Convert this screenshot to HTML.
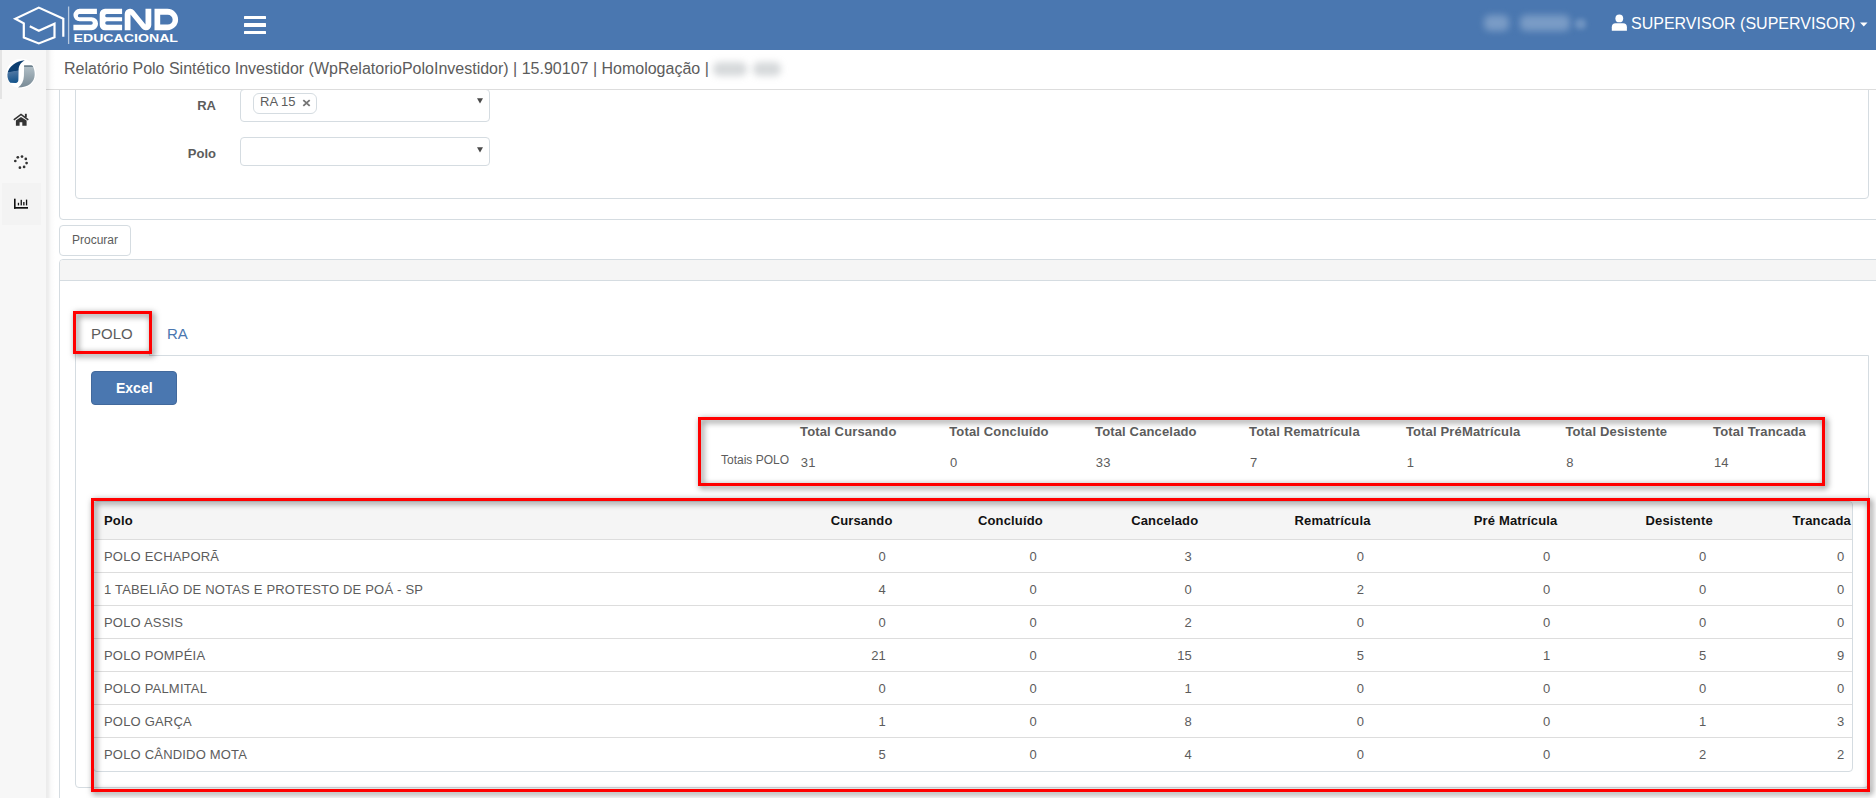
<!DOCTYPE html>
<html>
<head>
<meta charset="utf-8">
<style>
*{box-sizing:border-box;margin:0;padding:0}
html,body{width:1876px;height:798px;overflow:hidden;background:#fff;font-family:"Liberation Sans",sans-serif;color:#5c5c5c}
.abs{position:absolute}
#hdr{position:absolute;left:0;top:0;width:1876px;height:50px;background:#4a77b0}
#side{position:absolute;z-index:3;left:0;top:50px;width:46px;height:748px;background:#f7f7f7}
#sideshadow{position:absolute;z-index:3;left:46px;top:50px;width:9px;height:748px;background:linear-gradient(to right,rgba(0,0,0,0.075) 0,rgba(0,0,0,0.07) 2px,rgba(0,0,0,0.02) 5px,rgba(0,0,0,0) 9px)}
#title{position:absolute;left:46px;top:50px;width:1830px;height:40px;background:#fff;border-bottom:1px solid #ddd}
#content{position:absolute;left:0;top:90px;width:1876px;height:708px;overflow:hidden}
.bd{border:1px solid #d5dce1}
.t13{font-size:13px;letter-spacing:0.15px}
.b{font-weight:bold}
.red{border:3.5px solid #f00;filter:drop-shadow(2px 2px 3px rgba(0,0,0,0.6))}
</style>
</head>
<body>
<div id="hdr">
  <svg class="abs" style="left:0;top:0" width="200" height="50" viewBox="0 0 200 50">
    <g fill="none" stroke="#fff" stroke-width="2.2" stroke-linejoin="miter" stroke-linecap="butt">
      <polyline points="63.3,36.8 63.3,18.8 38.8,7.6 15.3,18.8 23.8,23.4 23.8,37.4 38.8,43.4 54.5,37.2 54.5,23.8 38.8,30.7 29.8,26.3"/>
    </g>
    <line x1="68.6" y1="6.5" x2="68.6" y2="44" stroke="rgba(255,255,255,0.6)" stroke-width="1.3"/>
    <g fill="#fff">
      <path fill-rule="evenodd" d="M96.9,8.8 L79.65,8.8 A6.25,6.25 0 0 0 79.65,21.3 L91.1,21.3 A1.7,1.7 0 0 1 91.1,24.7 L73.4,24.7 L73.4,30.2 L91.55,30.2 A6.5,6.5 0 0 0 91.55,17.2 L79.4,17.2 A1.55,1.55 0 0 1 79.4,14.1 L96.9,14.1 Z
M122.1,8.8 L105,8.8 A5.3,5.3 0 0 0 99.7,14.1 L99.7,24.9 A5.3,5.3 0 0 0 105,30.2 L122.1,30.2 L122.1,24.7 L106.9,24.7 A1.7,1.7 0 0 1 106.9,21.3 L122.1,21.3 L122.1,17.2 L106.75,17.2 A1.55,1.55 0 0 1 106.75,14.1 L122.1,14.1 Z
M124.7,30.2 L124.7,14 A5.2,5.2 0 0 1 129.9,8.8 L130.5,8.8 Q132.5,8.8 134,10.6 L145.5,24.6 L145.5,8.8 L151.3,8.8 L151.3,25 A5.2,5.2 0 0 1 146.1,30.2 L145.5,30.2 Q143.5,30.2 142,28.4 L130.5,14.4 L130.5,30.2 Z
M154.5,8.8 L167.4,8.8 A10.7,10.7 0 0 1 167.4,30.2 L154.5,30.2 Z M160.2,14.7 L167.7,14.7 A4.95,4.95 0 0 1 167.7,24.6 L160.2,24.6 Z"/>
      <text x="73.5" y="42.1" font-family="Liberation Sans" font-weight="bold" font-size="11" textLength="104.5" lengthAdjust="spacingAndGlyphs">EDUCACIONAL</text>
    </g>
  </svg>
  <div class="abs" style="left:244px;top:15.5px;width:22px;height:3.7px;background:#fff;border-radius:0.5px"></div>
  <div class="abs" style="left:244px;top:23px;width:22px;height:3.7px;background:#fff;border-radius:0.5px"></div>
  <div class="abs" style="left:244px;top:30.7px;width:22px;height:3.7px;background:#fff;border-radius:0.5px"></div>
  <!-- blurred -->
  <div class="abs" style="left:1484px;top:15px;width:25px;height:16px;background:rgba(200,215,235,0.38);filter:blur(3.5px);border-radius:6px"></div>
  <div class="abs" style="left:1520px;top:15px;width:50px;height:16px;background:rgba(200,215,235,0.38);filter:blur(3.5px);border-radius:6px"></div>
  <div class="abs" style="left:1575px;top:19px;width:11px;height:10px;background:rgba(200,215,235,0.3);filter:blur(2.5px);border-radius:4px"></div>
  <!-- user -->
  <svg class="abs" style="left:1611px;top:14px" width="17" height="17" viewBox="0 0 17 17">
    <circle cx="8.3" cy="4.4" r="3.9" fill="#fff"/>
    <path d="M0.8,16.8 L0.8,13.2 Q0.8,9.2 4.6,9.2 L12,9.2 Q15.9,9.2 15.9,13.2 L15.9,16.8 Z" fill="#fff"/>
  </svg>
  <div class="abs" style="left:1631px;top:15px;font-size:16px;color:#fff;white-space:nowrap;line-height:18px">SUPERVISOR (SUPERVISOR)</div>
  <svg class="abs" style="left:1860px;top:22px" width="8" height="5" viewBox="0 0 8 5"><path d="M0,0.5 L7.5,0.5 L3.75,4.4 Z" fill="#fff"/></svg>
</div>

<div id="side">
  <div class="abs" style="left:0;top:0;width:2px;height:49px;background:#e4e4e4"></div>
  <svg class="abs" style="left:0;top:0" width="46" height="46" viewBox="0 50 46 46">
    <defs>
      <linearGradient id="gb" gradientUnits="userSpaceOnUse" x1="19" y1="60" x2="23" y2="83">
        <stop offset="0" stop-color="#0c3d6f"/><stop offset="0.42" stop-color="#0c3f72"/>
        <stop offset="0.45" stop-color="#4d76a2"/><stop offset="1" stop-color="#0a4e87"/>
      </linearGradient>
      <linearGradient id="gg" gradientUnits="userSpaceOnUse" x1="0" y1="65.2" x2="0" y2="87.6">
        <stop offset="0" stop-color="#687c89"/><stop offset="0.07" stop-color="#6f8390"/><stop offset="0.1" stop-color="#aebcc4"/>
        <stop offset="1" stop-color="#788a95"/>
      </linearGradient>
    </defs>
    <circle cx="21.2" cy="73.6" r="14.8" fill="#fff"/>
    <path d="M24.75,60.3 C17,61 8,66 7.4,74.5 C7.2,78 8.5,81 10.3,82.8 L15.5,83 C17.5,83 18.4,81.5 18.4,79.5 L18.6,70 C18.7,66 20.5,62.5 24.75,60.3 Z" fill="url(#gb)"/>
    <path d="M24.1,65.2 L31.3,65.2 C32.5,65.2 33.2,66.5 33.6,67.8 C34.4,70 34.8,72.5 34.7,75 C34.4,82 28.5,87.6 18,87.6 C21.5,85 23.8,81 23.9,76 Z" fill="url(#gg)"/>
  </svg>
  <svg class="abs" style="left:12px;top:62px" width="18" height="14" viewBox="12 112 18 14">
    <path d="M13.8,119.9 L21,114.4 L28.3,119.9" fill="none" stroke="#333" stroke-width="1.6"/>
    <rect x="24.9" y="113.8" width="1.9" height="3.6" fill="#333"/>
    <path d="M15.9,120.6 L21,116.9 L26.6,120.6 L26.6,125.8 L22.3,125.8 L22.3,122.2 L19.6,122.2 L19.6,125.8 L15.9,125.8 Z" fill="#333"/>
  </svg>
  <svg class="abs" style="left:12px;top:104px" width="18" height="16" viewBox="12 154 18 16">
    <g fill="#333">
      <circle cx="17.8" cy="157.3" r="1.35"/><circle cx="22" cy="156.6" r="1.35"/>
      <circle cx="25.8" cy="158.9" r="1.35"/><circle cx="26.6" cy="163.1" r="1.35"/>
      <circle cx="24.1" cy="166.9" r="1.35"/><circle cx="19.9" cy="167.7" r="1.35"/>
      <circle cx="15.3" cy="161" r="1.35"/>
    </g>
  </svg>
  <div class="abs" style="left:2px;top:133px;width:39px;height:42px;background:#f3f3f3"></div>
  <svg class="abs" style="left:12px;top:146px" width="18" height="14" viewBox="12 196 18 14">
    <g fill="#111">
      <rect x="14" y="198.7" width="1.6" height="10"/><rect x="14" y="207" width="14" height="1.7"/>
      <rect x="17.8" y="202.8" width="1.3" height="2.6"/><rect x="20.6" y="199.8" width="1.3" height="5.6"/>
      <rect x="23.2" y="202" width="1.3" height="3.4"/><rect x="25.9" y="199.6" width="1.3" height="5.8"/>
    </g>
  </svg>
</div>

<div id="title">
  <div class="abs" style="left:18px;top:10px;font-size:16px;line-height:18px;white-space:nowrap;color:#5c5c5c">Relatório Polo Sintético Investidor (WpRelatorioPoloInvestidor) | 15.90107 | Homologação |</div>
  <div class="abs" style="left:667px;top:12px;width:34px;height:14px;background:rgba(120,128,136,0.3);filter:blur(3.5px);border-radius:6px"></div>
  <div class="abs" style="left:707px;top:12px;width:28px;height:14px;background:rgba(120,128,136,0.3);filter:blur(3.5px);border-radius:6px"></div>
</div>

<div id="content">
<div class="abs bd" style="left:59px;top:-50px;width:1900px;height:180px;border-radius:4px"></div>
<div class="abs bd" style="left:75px;top:-50px;width:1794px;height:159px;border-radius:4px"></div>
<div class="abs b" style="left:116px;width:100px;text-align:right;top:8px;font-size:13px;line-height:15px;color:#5c5c5c">RA</div>
<div class="abs b" style="left:116px;width:100px;text-align:right;top:56px;font-size:13px;line-height:15px;color:#5c5c5c">Polo</div>
<div class="abs bd" style="left:240px;top:-1px;width:250px;height:33px;border-radius:4px"></div>
<div class="abs bd" style="left:253px;top:3px;width:64px;height:21px;border-radius:6px"></div>
<div class="abs t13" style="left:260px;top:4px;line-height:15px;color:#5c5c5c;letter-spacing:0">RA 15</div>
<svg class="abs" style="left:302px;top:9px" width="9" height="8" viewBox="0 0 9 8"><path d="M1.3,1.1 L7.7,6.9 M7.7,1.1 L1.3,6.9" stroke="#747474" stroke-width="1.85"/></svg>
<svg class="abs" style="left:476px;top:8px" width="7" height="6" viewBox="0 0 7 6"><path d="M1,0.3 L7,0.3 L4,5.6 Z" fill="#4a4a4a"/></svg>
<div class="abs bd" style="left:240px;top:47px;width:250px;height:29px;border-radius:4px"></div>
<svg class="abs" style="left:476px;top:57px" width="7" height="6" viewBox="0 0 7 6"><path d="M1,0.3 L7,0.3 L4,5.6 Z" fill="#4a4a4a"/></svg>
<div class="abs bd" style="left:59px;top:135px;width:72px;height:31px;border-radius:4px"></div>
<div class="abs" style="left:72px;top:143px;font-size:12px;line-height:14px;color:#5c5c5c">Procurar</div>
<div class="abs bd" style="left:59px;top:169px;width:1900px;height:700px;border-radius:4px"></div>
<div class="abs" style="left:60px;top:170px;width:1900px;height:21px;background:#f5f5f5;border-bottom:1px solid #d5dce1;border-top-left-radius:3px"></div>
<div class="abs bd" style="left:75px;top:265px;width:1794px;height:433px;border-radius:0 0 4px 4px"></div>
<div class="abs" style="left:75px;top:222px;width:75px;height:44px;background:#fff;border:1px solid #d5dce1;border-bottom:0;border-radius:4px 4px 0 0"></div>
<div class="abs" style="left:91px;top:235px;font-size:15px;line-height:17px;color:#5c5c5c">POLO</div>
<div class="abs" style="left:167px;top:235px;font-size:15px;line-height:17px;color:#4a77b0">RA</div>
<div class="abs" style="left:91px;top:281px;width:86px;height:34px;border-radius:4px;background:#4a77b0;border:1px solid #42699c"></div>
<div class="abs b" style="left:116px;top:290px;font-size:14px;line-height:16px;color:#fff">Excel</div>
<div class="abs b t13" style="left:800.0px;top:334px;line-height:15px;color:#5c5c5c;white-space:nowrap">Total Cursando</div>
<div class="abs t13" style="left:800.8px;top:365px;line-height:15px;color:#5c5c5c">31</div>
<div class="abs b t13" style="left:949.2px;top:334px;line-height:15px;color:#5c5c5c;white-space:nowrap">Total Concluído</div>
<div class="abs t13" style="left:950.0px;top:365px;line-height:15px;color:#5c5c5c">0</div>
<div class="abs b t13" style="left:1095.0px;top:334px;line-height:15px;color:#5c5c5c;white-space:nowrap">Total Cancelado</div>
<div class="abs t13" style="left:1095.8px;top:365px;line-height:15px;color:#5c5c5c">33</div>
<div class="abs b t13" style="left:1249.1px;top:334px;line-height:15px;color:#5c5c5c;white-space:nowrap">Total Rematrícula</div>
<div class="abs t13" style="left:1249.9px;top:365px;line-height:15px;color:#5c5c5c">7</div>
<div class="abs b t13" style="left:1405.9px;top:334px;line-height:15px;color:#5c5c5c;white-space:nowrap">Total PréMatrícula</div>
<div class="abs t13" style="left:1406.7px;top:365px;line-height:15px;color:#5c5c5c">1</div>
<div class="abs b t13" style="left:1565.4px;top:334px;line-height:15px;color:#5c5c5c;white-space:nowrap">Total Desistente</div>
<div class="abs t13" style="left:1566.2px;top:365px;line-height:15px;color:#5c5c5c">8</div>
<div class="abs b t13" style="left:1713.1px;top:334px;line-height:15px;color:#5c5c5c;white-space:nowrap">Total Trancada</div>
<div class="abs t13" style="left:1713.9px;top:365px;line-height:15px;color:#5c5c5c">14</div>
<div class="abs" style="left:721px;top:363px;font-size:12px;line-height:14px;color:#5c5c5c;white-space:nowrap">Totais POLO</div>
<div class="abs bd" style="left:93px;top:411px;width:1760px;height:271px;border-radius:4px;overflow:hidden">
<div class="abs" style="left:0;top:0;width:1760px;height:37px;background:#f5f5f5"></div>
<div class="abs" style="left:0;top:37px;width:1760px;height:1px;background:#ddd"></div>
<div class="abs" style="left:0;top:70px;width:1760px;height:1px;background:#ddd"></div>
<div class="abs" style="left:0;top:103px;width:1760px;height:1px;background:#ddd"></div>
<div class="abs" style="left:0;top:136px;width:1760px;height:1px;background:#ddd"></div>
<div class="abs" style="left:0;top:169px;width:1760px;height:1px;background:#ddd"></div>
<div class="abs" style="left:0;top:202px;width:1760px;height:1px;background:#ddd"></div>
<div class="abs" style="left:0;top:235px;width:1760px;height:1px;background:#ddd"></div>

</div>
<div class="abs b t13" style="left:104px;top:423px;line-height:15px;color:#111">Polo</div>
<div class="abs b t13" style="left:592.5px;width:300px;text-align:right;top:423px;line-height:15px;color:#111;white-space:nowrap">Cursando</div>
<div class="abs b t13" style="left:742.9000000000001px;width:300px;text-align:right;top:423px;line-height:15px;color:#111;white-space:nowrap">Concluído</div>
<div class="abs b t13" style="left:898.3px;width:300px;text-align:right;top:423px;line-height:15px;color:#111;white-space:nowrap">Cancelado</div>
<div class="abs b t13" style="left:1070.6px;width:300px;text-align:right;top:423px;line-height:15px;color:#111;white-space:nowrap">Rematrícula</div>
<div class="abs b t13" style="left:1257.4px;width:300px;text-align:right;top:423px;line-height:15px;color:#111;white-space:nowrap">Pré Matrícula</div>
<div class="abs b t13" style="left:1412.8px;width:300px;text-align:right;top:423px;line-height:15px;color:#111;white-space:nowrap">Desistente</div>
<div class="abs b t13" style="left:1550.9px;width:300px;text-align:right;top:423px;line-height:15px;color:#111;white-space:nowrap">Trancada</div>
<div class="abs t13" style="left:104px;top:459px;line-height:15px;color:#5c5c5c;white-space:nowrap;letter-spacing:0.19px">POLO ECHAPORÃ</div>
<div class="abs t13" style="left:586.0px;width:300px;text-align:right;top:459px;line-height:15px;color:#5c5c5c">0</div>
<div class="abs t13" style="left:737.0px;width:300px;text-align:right;top:459px;line-height:15px;color:#5c5c5c">0</div>
<div class="abs t13" style="left:892.0px;width:300px;text-align:right;top:459px;line-height:15px;color:#5c5c5c">3</div>
<div class="abs t13" style="left:1064.2px;width:300px;text-align:right;top:459px;line-height:15px;color:#5c5c5c">0</div>
<div class="abs t13" style="left:1250.5px;width:300px;text-align:right;top:459px;line-height:15px;color:#5c5c5c">0</div>
<div class="abs t13" style="left:1406.3px;width:300px;text-align:right;top:459px;line-height:15px;color:#5c5c5c">0</div>
<div class="abs t13" style="left:1544.5px;width:300px;text-align:right;top:459px;line-height:15px;color:#5c5c5c">0</div>
<div class="abs t13" style="left:104px;top:492px;line-height:15px;color:#5c5c5c;white-space:nowrap;letter-spacing:0.19px">1 TABELIÃO DE NOTAS E PROTESTO DE POÁ - SP</div>
<div class="abs t13" style="left:586.0px;width:300px;text-align:right;top:492px;line-height:15px;color:#5c5c5c">4</div>
<div class="abs t13" style="left:737.0px;width:300px;text-align:right;top:492px;line-height:15px;color:#5c5c5c">0</div>
<div class="abs t13" style="left:892.0px;width:300px;text-align:right;top:492px;line-height:15px;color:#5c5c5c">0</div>
<div class="abs t13" style="left:1064.2px;width:300px;text-align:right;top:492px;line-height:15px;color:#5c5c5c">2</div>
<div class="abs t13" style="left:1250.5px;width:300px;text-align:right;top:492px;line-height:15px;color:#5c5c5c">0</div>
<div class="abs t13" style="left:1406.3px;width:300px;text-align:right;top:492px;line-height:15px;color:#5c5c5c">0</div>
<div class="abs t13" style="left:1544.5px;width:300px;text-align:right;top:492px;line-height:15px;color:#5c5c5c">0</div>
<div class="abs t13" style="left:104px;top:525px;line-height:15px;color:#5c5c5c;white-space:nowrap;letter-spacing:0.19px">POLO ASSIS</div>
<div class="abs t13" style="left:586.0px;width:300px;text-align:right;top:525px;line-height:15px;color:#5c5c5c">0</div>
<div class="abs t13" style="left:737.0px;width:300px;text-align:right;top:525px;line-height:15px;color:#5c5c5c">0</div>
<div class="abs t13" style="left:892.0px;width:300px;text-align:right;top:525px;line-height:15px;color:#5c5c5c">2</div>
<div class="abs t13" style="left:1064.2px;width:300px;text-align:right;top:525px;line-height:15px;color:#5c5c5c">0</div>
<div class="abs t13" style="left:1250.5px;width:300px;text-align:right;top:525px;line-height:15px;color:#5c5c5c">0</div>
<div class="abs t13" style="left:1406.3px;width:300px;text-align:right;top:525px;line-height:15px;color:#5c5c5c">0</div>
<div class="abs t13" style="left:1544.5px;width:300px;text-align:right;top:525px;line-height:15px;color:#5c5c5c">0</div>
<div class="abs t13" style="left:104px;top:558px;line-height:15px;color:#5c5c5c;white-space:nowrap;letter-spacing:0.19px">POLO POMPÉIA</div>
<div class="abs t13" style="left:586.0px;width:300px;text-align:right;top:558px;line-height:15px;color:#5c5c5c">21</div>
<div class="abs t13" style="left:737.0px;width:300px;text-align:right;top:558px;line-height:15px;color:#5c5c5c">0</div>
<div class="abs t13" style="left:892.0px;width:300px;text-align:right;top:558px;line-height:15px;color:#5c5c5c">15</div>
<div class="abs t13" style="left:1064.2px;width:300px;text-align:right;top:558px;line-height:15px;color:#5c5c5c">5</div>
<div class="abs t13" style="left:1250.5px;width:300px;text-align:right;top:558px;line-height:15px;color:#5c5c5c">1</div>
<div class="abs t13" style="left:1406.3px;width:300px;text-align:right;top:558px;line-height:15px;color:#5c5c5c">5</div>
<div class="abs t13" style="left:1544.5px;width:300px;text-align:right;top:558px;line-height:15px;color:#5c5c5c">9</div>
<div class="abs t13" style="left:104px;top:591px;line-height:15px;color:#5c5c5c;white-space:nowrap;letter-spacing:0.19px">POLO PALMITAL</div>
<div class="abs t13" style="left:586.0px;width:300px;text-align:right;top:591px;line-height:15px;color:#5c5c5c">0</div>
<div class="abs t13" style="left:737.0px;width:300px;text-align:right;top:591px;line-height:15px;color:#5c5c5c">0</div>
<div class="abs t13" style="left:892.0px;width:300px;text-align:right;top:591px;line-height:15px;color:#5c5c5c">1</div>
<div class="abs t13" style="left:1064.2px;width:300px;text-align:right;top:591px;line-height:15px;color:#5c5c5c">0</div>
<div class="abs t13" style="left:1250.5px;width:300px;text-align:right;top:591px;line-height:15px;color:#5c5c5c">0</div>
<div class="abs t13" style="left:1406.3px;width:300px;text-align:right;top:591px;line-height:15px;color:#5c5c5c">0</div>
<div class="abs t13" style="left:1544.5px;width:300px;text-align:right;top:591px;line-height:15px;color:#5c5c5c">0</div>
<div class="abs t13" style="left:104px;top:624px;line-height:15px;color:#5c5c5c;white-space:nowrap;letter-spacing:0.19px">POLO GARÇA</div>
<div class="abs t13" style="left:586.0px;width:300px;text-align:right;top:624px;line-height:15px;color:#5c5c5c">1</div>
<div class="abs t13" style="left:737.0px;width:300px;text-align:right;top:624px;line-height:15px;color:#5c5c5c">0</div>
<div class="abs t13" style="left:892.0px;width:300px;text-align:right;top:624px;line-height:15px;color:#5c5c5c">8</div>
<div class="abs t13" style="left:1064.2px;width:300px;text-align:right;top:624px;line-height:15px;color:#5c5c5c">0</div>
<div class="abs t13" style="left:1250.5px;width:300px;text-align:right;top:624px;line-height:15px;color:#5c5c5c">0</div>
<div class="abs t13" style="left:1406.3px;width:300px;text-align:right;top:624px;line-height:15px;color:#5c5c5c">1</div>
<div class="abs t13" style="left:1544.5px;width:300px;text-align:right;top:624px;line-height:15px;color:#5c5c5c">3</div>
<div class="abs t13" style="left:104px;top:657px;line-height:15px;color:#5c5c5c;white-space:nowrap;letter-spacing:0.19px">POLO CÂNDIDO MOTA</div>
<div class="abs t13" style="left:586.0px;width:300px;text-align:right;top:657px;line-height:15px;color:#5c5c5c">5</div>
<div class="abs t13" style="left:737.0px;width:300px;text-align:right;top:657px;line-height:15px;color:#5c5c5c">0</div>
<div class="abs t13" style="left:892.0px;width:300px;text-align:right;top:657px;line-height:15px;color:#5c5c5c">4</div>
<div class="abs t13" style="left:1064.2px;width:300px;text-align:right;top:657px;line-height:15px;color:#5c5c5c">0</div>
<div class="abs t13" style="left:1250.5px;width:300px;text-align:right;top:657px;line-height:15px;color:#5c5c5c">0</div>
<div class="abs t13" style="left:1406.3px;width:300px;text-align:right;top:657px;line-height:15px;color:#5c5c5c">2</div>
<div class="abs t13" style="left:1544.5px;width:300px;text-align:right;top:657px;line-height:15px;color:#5c5c5c">2</div>
<div class="abs red" style="left:73px;top:221px;width:78.5px;height:43px"></div>
<div class="abs red" style="left:698px;top:327px;width:1127px;height:69px"></div>
<div class="abs red" style="left:91px;top:408px;width:1779px;height:294px"></div>
</div>
<div id="sideshadow"></div>
</body>
</html>
